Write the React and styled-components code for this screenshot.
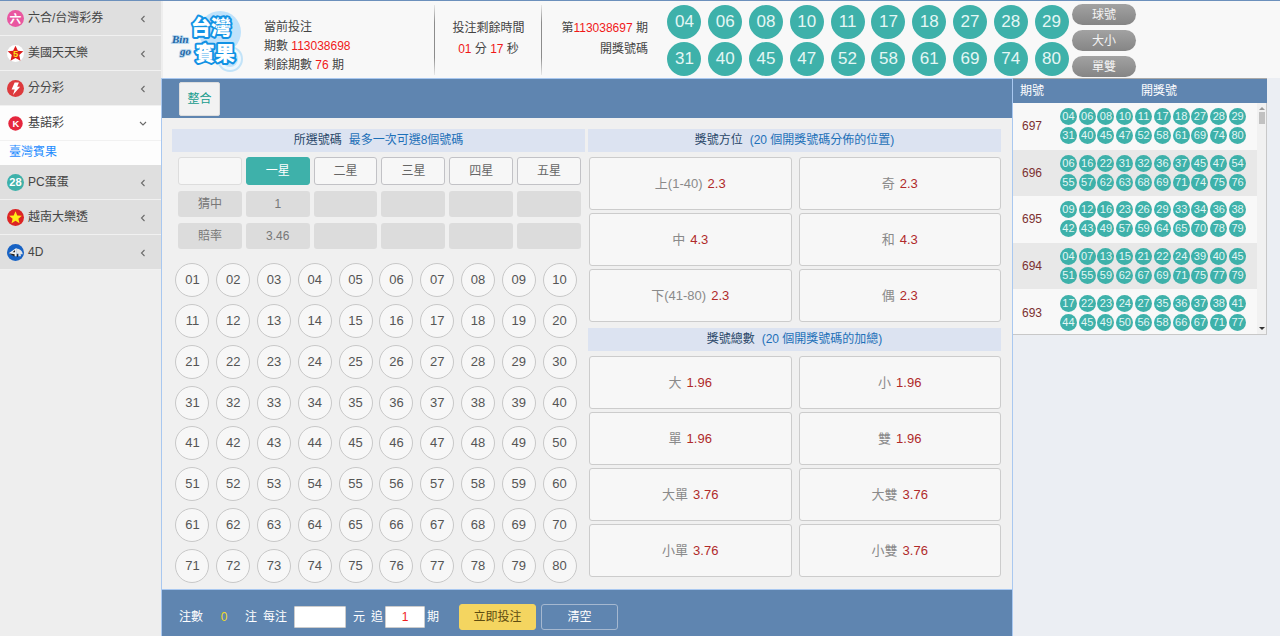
import React, { useState } from "react";
import styled, { createGlobalStyle, css } from "styled-components";

const teal = "#3eb1aa";
const blue = "#5f85b0";
const line = "#a9c8f0";

const GlobalStyle = createGlobalStyle`
  * { box-sizing: border-box; }
  body { margin: 0; background: #ebeef3; }
  body, button, input {
    font-family: "Liberation Sans", "Noto Sans CJK TC", sans-serif;
    font-size: 12px;
    line-height: 20px;
    color: #444;
  }
  button { cursor: pointer; padding: 0; border: 0; background: none; }
  ul { list-style: none; margin: 0; padding: 0; }
  h2, p { margin: 0; font-weight: normal; }
`;

const Page = styled.div`
  display: flex;
  min-height: 100vh;
  border-top: 1px solid #6c90bc;
`;
const Sidebar = styled.nav`
  flex: 0 0 161px;
  background: #eee;
`;
const MenuButton = styled.button`
  display: flex;
  align-items: center;
  gap: 4px;
  width: 100%;
  height: 35px;
  padding: 0 12px 0 7px;
  text-align: left;
  color: #444;
  border-bottom: 1px solid #f1f1f1;
  background: ${(p) => (p.$open ? "#fdfdfd" : "#dfdfdf")};
  svg { flex: none; }
`;
const MenuLabel = styled.span`
  flex: 1;
`;
const SubLink = styled.a`
  display: block;
  height: 24px;
  padding: 0 9px;
  line-height: 22px;
  color: #1e8cff;
  text-decoration: none;
  background: #fdfdfd;
`;

const Content = styled.div`
  flex: 1;
  min-width: 0;
  display: flex;
  flex-direction: column;
`;
const Header = styled.header`
  display: flex;
  height: 77px;
  background: #f8f8f8;
  border-left: 2px solid #eee;
`;
const LogoBox = styled.div`
  flex: 0 0 101px;
  padding: 3px 0 0 5px;
`;
const Info = styled.div`
  flex: 0 0 ${(p) => p.$w}px;
  padding: 17px ${(p) => p.$right || 0}px 0 0;
  text-align: ${(p) => p.$align || "left"};
  line-height: ${(p) => p.$lh || 21}px;
  white-space: nowrap;
  ${(p) => p.$rule && css`
    background: linear-gradient(#e8e8e8, #8c8c8c 25%, #8c8c8c 75%, #e8e8e8) right center / 1px 70px no-repeat;
  `}
`;
const Red = styled.span`
  color: #f01818;
`;
const Drawn = styled.div`
  flex: 0 0 408px;
  display: grid;
  grid-template-columns: repeat(10, 1fr);
  justify-items: center;
  align-content: start;
  row-gap: 3px;
  padding-top: 4px;
`;
const Ball = styled.span`
  display: block;
  width: 34px;
  height: 34px;
  border-radius: 50%;
  background: ${teal};
  color: #e4f7f5;
  font-size: 17px;
  line-height: 34px;
  text-align: center;
`;
const Pills = styled.div`
  display: flex;
  flex-direction: column;
  gap: 5px;
  padding-top: 3px;
`;
const Pill = styled.button`
  width: 64px;
  height: 21px;
  border-radius: 11px;
  color: #f4f4f4;
  background: linear-gradient(#a2a2a2, #858585);
`;

const Body = styled.div`
  flex: 1;
  display: flex;
  align-items: stretch;
`;
const Main = styled.main`
  flex: 1;
  min-width: 0;
  display: flex;
  flex-direction: column;
  background: #f0f0f0;
  border: solid ${line};
  border-width: 1px 1px 0 1px;
`;
const TabBar = styled.div`
  height: 39px;
  padding: 3px 17px;
  background: ${blue};
`;
const Tab = styled.button`
  width: 41px;
  height: 34px;
  border: 1px solid #ddd;
  border-radius: 2px;
  background: #f2f2f2;
  color: #179c8d;
`;
const Board = styled.div`
  flex: 1;
  display: grid;
  grid-template-columns: 1fr 1fr;
  gap: 3px;
  padding: 11px 11px 6px 10px;
`;
const Column = styled.section`
  display: flex;
  flex-direction: column;
`;
const Heading = styled.h2`
  height: 23px;
  font-size: 12px;
  line-height: 23px;
  text-align: center;
  background: #dce3f1;
  color: #294768;
`;
const Hint = styled.span`
  margin-left: 7px;
  color: #1d70b8;
`;
const StarTable = styled.table`
  width: 100%;
  margin-top: -1px;
  border-spacing: 4px 6px;
  table-layout: fixed;
  padding: 0 0 0 2px;
  td { padding: 0; }
`;
const cell = css`
  display: block;
  width: 100%;
  border-radius: 3px;
  text-align: center;
`;
const StarButton = styled.button`
  ${cell}
  height: 28px;
  border: 1px solid ${(p) => (p.$on ? teal : p.$blank ? "#ddd" : "#c2c2c6")};
  background: ${(p) => (p.$on ? teal : "#f7f7f7")};
  color: ${(p) => (p.$on ? "#fff" : "#666")};
`;
const StarCell = styled.span`
  ${cell}
  height: 26px;
  line-height: 27px;
  background: #dcdcdc;
  color: #777;
`;
const Numbers = styled.div`
  flex: 1;
  display: grid;
  grid-template-columns: repeat(10, 1fr);
  justify-items: center;
  align-content: space-between;
  padding: 8px 5px 0 0;
`;
const NumberButton = styled.button`
  width: 34px;
  height: 34px;
  border: 1px solid #c8c8c8;
  border-radius: 50%;
  background: ${(p) => (p.$on ? teal : "#f7f7f7")};
  color: ${(p) => (p.$on ? "#fff" : "#555")};
  font-size: 13px;
`;
const Options = styled.div`
  display: grid;
  grid-template-columns: 1fr 1fr;
  gap: 3px 7px;
  padding: 5px 0 6px 1px;
`;
const Option = styled.button`
  height: 53px;
  border: 1px solid #ccc;
  border-radius: 3px;
  background: #f7f7f7;
  color: #8a8a8a;
  font-size: 13px;
`;
const Odds = styled.span`
  margin-left: 5px;
  color: #b02a2a;
`;

const BetBar = styled.form`
  display: flex;
  align-items: center;
  height: 47px;
  padding: 7px 17px 0;
  border-top: 1px solid ${line};
  background: ${blue};
  color: #fff;
  white-space: nowrap;
`;
const Count = styled.output`
  width: 42px;
  text-align: center;
  color: #f0dc28;
`;
const Field = styled.label`
  display: flex;
  align-items: center;
  gap: ${(p) => p.$gap}px;
  margin-left: 6px;
`;
const TextBox = styled.input`
  width: ${(p) => p.$w}px;
  height: 22px;
  padding: 0;
  border: 1px solid #ccc;
  border-radius: 1px;
  background: #fff;
  color: #f02020;
  text-align: center;
`;
const Action = styled.button`
  width: 77px;
  height: 26px;
  margin-left: ${(p) => (p.$primary ? 20 : 5)}px;
  border: 1px solid ${(p) => (p.$primary ? "#f4d560" : "#a5b8d0")};
  border-radius: 3px;
  background: ${(p) => (p.$primary ? "#f4d560" : "transparent")};
  color: ${(p) => (p.$primary ? "#5d4c10" : "#fff")};
`;

const History = styled.aside`
  flex: 0 0 267px;
  padding-right: 13px;
`;
const HistoryHead = styled.div`
  display: grid;
  grid-template-columns: 38px 1fr;
  height: 25px;
  border-top: 1px solid #aaa;
  background: ${blue};
  color: #fff;
  line-height: 25px;
  text-align: center;
`;
const HistoryList = styled.div`
  display: flex;
  height: 232px;
  overflow: hidden;
  border: solid #c8c8c8;
  border-width: 0 1px 1px 0;
  background: #f8f8f8;
`;
const HistoryTable = styled.table`
  flex: 1;
  height: 233px;
  border-collapse: collapse;
  tr:nth-child(even) { background: #e8e8e8; }
  th, td { padding: 0; }
  th { width: 38px; font-weight: normal; color: #7c3030; }
`;
const MiniGrid = styled.div`
  display: grid;
  grid-template-columns: repeat(10, 1fr);
  justify-items: center;
  row-gap: 2px;
  padding: 0 10px 0 8px;
`;
const MiniBall = styled.span`
  width: 17px;
  height: 17px;
  border-radius: 50%;
  background: ${teal};
  color: #e4f7f5;
  font-size: 11px;
  line-height: 17px;
  text-align: center;
`;
const ScrollTrack = styled.div`
  flex: 0 0 9px;
  display: flex;
  flex-direction: column;
  align-items: center;
  background: #f1f1f1;
  padding: 4px 0;
`;
const Arrow = styled.i`
  border: 3px solid transparent;
  border-top-width: 0;
  border-bottom: 3px solid #999;
  ${(p) => p.$down && css`
    margin-top: auto;
    border-top: 3px solid #333;
    border-bottom-width: 0;
  `}
`;
const Thumb = styled.i`
  width: 6px;
  height: 12px;
  margin-top: 2px;
  background: #c1c1c1;
`;

const iconText = { textAnchor: "middle", fontWeight: 700, fontFamily: '"Liberation Sans", "Noto Sans CJK TC", sans-serif' };
const star = "10,0.8 12.8,6.8 19.2,7.4 14.4,11.8 15.8,18.6 10,15.2 4.2,18.6 5.6,11.8 0.8,7.4 7.2,6.8";

function Icon({ kind }) {
  return (
    <svg width="17" height="17" viewBox="0 0 20 20" aria-hidden="true">
      {kind === "six" && (<>
        <circle cx="10" cy="10" r="10" fill="#e957a0" />
        <text x="10" y="15" fontSize="14" fill="#fff" {...iconText}>六</text>
      </>)}
      {kind === "us" && (<>
        <circle cx="10" cy="10" r="10" fill="#fff" />
        <polygon points={star} fill="#dd1c1c" />
        <text x="10" y="14.2" fontSize="11" fill="#ffe01a" {...iconText}>5</text>
      </>)}
      {kind === "bolt" && (<>
        <circle cx="10" cy="10" r="10" fill="#dd3a3d" />
        <path d="M9 3h5l-2 5h3.400L7 17.500l2-6.300H5.400z" fill="#fff" />
      </>)}
      {kind === "keno" && (<>
        <circle cx="10" cy="10" r="8.5" fill="#e5263d" />
        <text x="10.3" y="14" fontSize="11" fill="#fff" {...iconText}>K</text>
      </>)}
      {kind === "pc" && (<>
        <circle cx="10" cy="10" r="10" fill={teal} />
        <text x="10" y="14.6" fontSize="13" fill="#fff" {...iconText}>28</text>
      </>)}
      {kind === "vn" && (<>
        <circle cx="10" cy="10" r="10" fill="#dc2424" />
        <polygon points="10,2.5 12.1,7.6 17.5,8 13.4,11.5 14.7,16.8 10,13.9 5.3,16.8 6.6,11.5 2.5,8 7.9,7.6" fill="#ffec17" />
      </>)}
      {kind === "four" && (<>
        <circle cx="10" cy="10" r="10" fill="#1762c4" />
        <path d="M10.500 5 2 10.800 9 14.500h2.500V5z" fill="#f2f2f2" />
        <path d="M2 10.800 9 12v3z" fill="#222" />
        <path d="M9.500 7 6.500 9.800h3z" fill="#222" />
        <path d="M11.500 5.500c4 0 7 3 7 6.500h-2.500l.5 2.500h-3v-3h-2z" fill="#e2e2e2" />
        <path d="M11.500 12h1.500v3h-1.500z" fill="#222" />
      </>)}
    </svg>
  );
}

function Chevron({ open }) {
  return (
    <svg width="12" height="12" viewBox="0 0 12 12" fill="none" stroke="#6a6a6a" strokeWidth="1.1" aria-hidden="true">
      <path d={open ? "M3 5l3 3 3-3" : "M7.500 4 4.500 7l3 3"} />
    </svg>
  );
}

function Logo() {
  const word = {
    fontFamily: '"Liberation Sans", "Noto Sans CJK TC", sans-serif', fontWeight: 900, fontSize: 20, fill: "#fff",
    stroke: "#1292e4", strokeWidth: 4, paintOrder: "stroke", strokeLinejoin: "round",
  };
  const bingo = {
    fontFamily: '"Liberation Serif", serif', fontWeight: 700, fontStyle: "italic", fontSize: 11,
    fill: "#1f66a5", stroke: "#b9d9f0", strokeWidth: 2, paintOrder: "stroke",
  };
  return (
    <svg width="76" height="72" viewBox="0 0 76 72" role="img" aria-label="台灣賓果 Bingo">
      <circle cx="52" cy="28" r="21" fill="#bfe2fb" />
      <circle cx="62" cy="55" r="12" fill="#eef7fd" stroke="#c3e3f8" strokeWidth="2" />
      <circle cx="62" cy="55" r="8" fill="#bfe2fb" />
      <text x="23" y="31" {...word}>台灣</text>
      <text x="27" y="57" {...word}>賓果</text>
      <text x="4" y="39" {...bingo}>Bin</text>
      <text x="12" y="51" {...bingo}>go</text>
    </svg>
  );
}

const menu = [
  { icon: "six", label: "六合/台灣彩券" },
  { icon: "us", label: "美國天天樂" },
  { icon: "bolt", label: "分分彩" },
  { icon: "keno", label: "基諾彩", open: true, sub: "臺灣賓果" },
  { icon: "pc", label: "PC蛋蛋" },
  { icon: "vn", label: "越南大樂透" },
  { icon: "four", label: "4D" },
];
const draws = [
  ["697", "04 06 08 10 11 17 18 27 28 29 31 40 45 47 52 58 61 69 74 80"],
  ["696", "06 16 22 31 32 36 37 45 47 54 55 57 62 63 68 69 71 74 75 76"],
  ["695", "09 12 16 23 26 29 33 34 36 38 42 43 49 57 59 64 65 70 78 79"],
  ["694", "04 07 13 15 21 22 24 39 40 45 51 55 59 62 67 69 71 75 77 79"],
  ["693", "17 22 23 24 27 35 36 37 38 41 44 45 49 50 56 58 66 67 71 77"],
];
const stars = ["", "一星", "二星", "三星", "四星", "五星"];
const starRows = [
  ["猜中", "1", "", "", "", ""],
  ["賠率", "3.46", "", "", "", ""],
];
const positions = [["上(1-40)", "2.3"], ["奇", "2.3"], ["中", "4.3"], ["和", "4.3"], ["下(41-80)", "2.3"], ["偶", "2.3"]];
const totals = [
  ["大", "1.96"], ["小", "1.96"], ["單", "1.96"], ["雙", "1.96"],
  ["大單", "3.76"], ["大雙", "3.76"], ["小單", "3.76"], ["小雙", "3.76"],
];
const numbers = Array.from({ length: 80 }, (_, i) => String(i + 1).padStart(2, "0"));

function OptionGroup({ items }) {
  return (
    <Options>
      {items.map(([label, odds]) => (
        <Option key={label} type="button">{label}<Odds>{odds}</Odds></Option>
      ))}
    </Options>
  );
}

export default function App() {
  const [starIndex, setStarIndex] = useState(1);
  const [picked, setPicked] = useState([]);
  const toggle = (n) =>
    setPicked((p) => (p.includes(n) ? p.filter((x) => x !== n) : p.length < 8 ? [...p, n] : p));

  return (
    <Page>
      <GlobalStyle />
      <Sidebar>
        <ul>
          {menu.map((m) => (
            <li key={m.label}>
              <MenuButton type="button" $open={m.open} aria-expanded={!!m.open}>
                <Icon kind={m.icon} />
                <MenuLabel>{m.label}</MenuLabel>
                <Chevron open={m.open} />
              </MenuButton>
              {m.sub && <SubLink href="#bingo">{m.sub}</SubLink>}
            </li>
          ))}
        </ul>
      </Sidebar>
      <Content>
        <Header>
          <LogoBox><Logo /></LogoBox>
          <Info $w={171} $lh={19} $rule>
            <p>當前投注</p>
            <p>期數 <Red>113038698</Red></p>
            <p>剩餘期數 <Red>76</Red> 期</p>
          </Info>
          <Info $w={107} $align="center" $rule>
            <p>投注剩餘時間</p>
            <p><Red>01</Red> 分 <Red>17</Red> 秒</p>
          </Info>
          <Info $w={122} $right={16} $align="right">
            <p>第<Red>113038697</Red> 期</p>
            <p>開獎號碼</p>
          </Info>
          <Drawn>
            {draws[0][1].split(" ").map((n) => <Ball key={n}>{n}</Ball>)}
          </Drawn>
          <Pills>
            <Pill type="button">球號</Pill>
            <Pill type="button">大小</Pill>
            <Pill type="button">單雙</Pill>
          </Pills>
        </Header>
        <Body>
          <Main>
            <TabBar><Tab type="button">整合</Tab></TabBar>
            <Board>
              <Column>
                <Heading>所選號碼<Hint>最多一次可選8個號碼</Hint></Heading>
                <StarTable>
                  <tbody>
                    <tr>
                      {stars.map((s, i) => (
                        <td key={i}>
                          <StarButton type="button" $on={i === starIndex} $blank={!s} disabled={!s} onClick={() => setStarIndex(i)}>
                            {s}
                          </StarButton>
                        </td>
                      ))}
                    </tr>
                    {starRows.map((r) => (
                      <tr key={r[0]}>{r.map((v, i) => <td key={i}><StarCell>{v}</StarCell></td>)}</tr>
                    ))}
                  </tbody>
                </StarTable>
                <Numbers>
                  {numbers.map((n) => (
                    <NumberButton key={n} type="button" $on={picked.includes(n)} onClick={() => toggle(n)}>{n}</NumberButton>
                  ))}
                </Numbers>
              </Column>
              <Column>
                <Heading>獎號方位<Hint>(20 個開獎號碼分佈的位置)</Hint></Heading>
                <OptionGroup items={positions} />
                <Heading>獎號總數<Hint>(20 個開獎號碼的加總)</Hint></Heading>
                <OptionGroup items={totals} />
              </Column>
            </Board>
            <BetBar onSubmit={(e) => e.preventDefault()}>
              <span>注數</span>
              <Count>{picked.length}</Count>
              <span>注</span>
              <Field $gap={7}>每注<TextBox $w={52} name="amount" />元</Field>
              <Field $gap={2}>追<TextBox $w={40} name="periods" defaultValue="1" />期</Field>
              <Action $primary type="submit">立即投注</Action>
              <Action type="reset" onClick={() => setPicked([])}>清空</Action>
            </BetBar>
          </Main>
          <History>
            <HistoryHead><span>期號</span><span>開獎號</span></HistoryHead>
            <HistoryList>
              <HistoryTable>
                <tbody>
                  {draws.map(([id, balls]) => (
                    <tr key={id}>
                      <th scope="row">{id}</th>
                      <td>
                        <MiniGrid>{balls.split(" ").map((n) => <MiniBall key={n}>{n}</MiniBall>)}</MiniGrid>
                      </td>
                    </tr>
                  ))}
                </tbody>
              </HistoryTable>
              <ScrollTrack aria-hidden="true"><Arrow /><Thumb /><Arrow $down /></ScrollTrack>
            </HistoryList>
          </History>
        </Body>
      </Content>
    </Page>
  );
}
